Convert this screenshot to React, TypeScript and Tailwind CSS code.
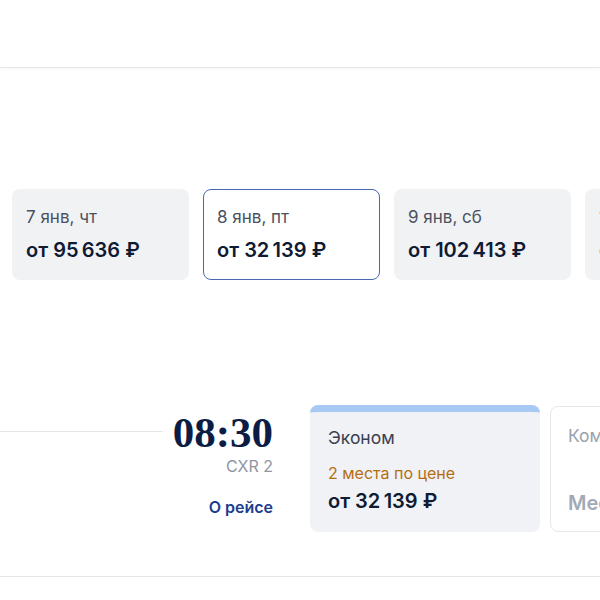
const dates = [
  { label: "7 янв, чт", price: "95\u2009636", active: false },
  { label: "8 янв, пт", price: "32\u2009139", active: true },
  { label: "9 янв, сб", price: "102\u2009413", active: false },
  { label: "10 янв, вс", price: "41\u2009870", active: false },
];

function DateCard({ label, price, active }: { label: string; price: string; active: boolean }) {
  return (
    <div
      className={
        active
          ? "w-[177px] h-[91px] shrink-0 rounded-[8px] bg-white border border-[#4868b3] pl-[13px] pt-[15px]"
          : "w-[177px] h-[91px] shrink-0 rounded-[8px] bg-[#f1f2f4] pl-[14px] pt-[16px]"
      }
    >
      <p className="text-[17px] leading-[24px] text-[#4a5160]">{label}</p>
      <p className="mt-[7px] text-[20px] leading-[28px] font-semibold text-[#0f1a33]">от {price} ₽</p>
    </div>
  );
}

export default function App() {
  return (
    <div className="w-[600px] h-[600px] overflow-hidden bg-white font-['Inter','Noto_Sans',sans-serif]">
      {/* шапка */}
      <div className="h-[68px] bg-white border-b border-[#e8e8e8] shadow-[0_1px_3px_rgba(0,0,0,0.04)]"></div>

      {/* даты */}
      <div className="mt-[121px] flex gap-[14px] pl-[12px]">
        {dates.map((d) => (
          <DateCard key={d.label} {...d} />
        ))}
      </div>

      {/* рейс */}
      <div className="mt-[125px] flex items-start h-[172px] border-b border-[#e6e6e6]">
        <div className="w-[273px] shrink-0 flex items-start">
          <div className="flex-1 h-px bg-[#e3e6eb] mt-[26px]"></div>
          <div className="ml-[10px] flex flex-col items-end">
            <p className="mt-[6px] font-['Liberation_Serif',serif] font-bold text-[43px] leading-[43px] text-[#0c1d45]">08:30</p>
            <p className="mt-[2px] text-[16px] leading-[20px] text-[#8e96a3]">CXR 2</p>
            <p className="mt-[21px] text-[16px] leading-[20px] font-semibold text-[#1d3d8f]">О рейсе</p>
          </div>
        </div>

        <div className="ml-[37px] w-[230px] h-[127px] shrink-0 rounded-[8px] bg-[#f0f2f5] border-t-[7px] border-[#a9c9f5] px-[18px] pt-[14px]">
          <p className="text-[17.5px] leading-[24px] text-[#3a4150]">Эконом</p>
          <p className="mt-[13px] text-[16px] leading-[20px] text-[#b56d14]">2 места по цене</p>
          <p className="mt-[4px] text-[20px] leading-[28px] font-semibold text-[#0f1a33]">от 32{"\u2009"}139 ₽</p>
        </div>

        <div className="ml-[10px] mt-[1px] w-[200px] h-[126px] shrink-0 rounded-[8px] bg-white border border-[#e4e7ec] px-[17px] pt-[17px]">
          <p className="text-[17.5px] leading-[24px] text-[#9aa2ae]">Комфорт</p>
          <p className="mt-[41px] text-[20px] leading-[28px] font-semibold text-[#a3aab5]">Мест нет</p>
        </div>
      </div>
    </div>
  );
}
